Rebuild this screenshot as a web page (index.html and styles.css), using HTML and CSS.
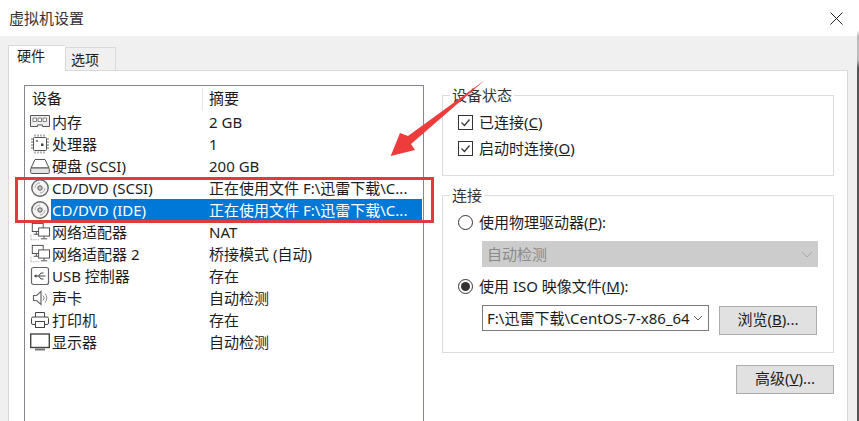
FILE: index.html
```html
<!DOCTYPE html>
<html lang="zh-CN">
<head>
    <meta charset="UTF-8">
    <meta name="viewport" content="width=device-width, initial-scale=1.0">
    <title>虚拟机设置</title>
    <link rel="stylesheet" href="styles.css">
</head>
<body>
    <svg class="defs" width="0" height="0">
        <symbol id="i-cd" viewBox="0 0 20 20">
            <circle cx="10" cy="10" r="8.2" fill="#f4f4f4" stroke="#666" stroke-width="1.4"/>
            <path d="M5 10a5 5 0 0 1 5-5M15 10a5 5 0 0 1-5 5" fill="none" stroke="#aaa"/>
            <circle cx="10" cy="10" r="2.200" fill="#ccc" stroke="#555"/>
        </symbol>
        <symbol id="i-net" viewBox="0 0 22 20">
            <rect x="2.500" y="0.500" width="12" height="9" fill="#fff" stroke="#444"/>
            <rect x="9.500" y="5.500" width="12" height="9" fill="#fff" stroke="#444"/>
            <path d="M7 9.500v3M4 12.500h5M15.500 14.500v2.500M12 17.500h7" fill="none" stroke="#444"/>
            <path d="M1 13v6M1 18.500h10" stroke="#999" stroke-dasharray="1 1"/>
        </symbol>
    </svg>

    <div class="titlebar">
        <span class="title">虚拟机设置</span>
        <svg class="close" width="13" height="13" viewBox="0 0 13 13"><path d="M0.500 0.500l12 12M12.500 0.500l-12 12" stroke="#222" fill="none"/></svg>
    </div>

    <div class="tabs">
        <div class="tab active">硬件</div>
        <div class="tab">选项</div>
    </div>

    <div class="panel">
        <div class="device-list">
            <div class="list-head">
                <div class="col-device">设备</div>
                <div class="col-summary">摘要</div>
            </div>
            <div class="row">
                <svg class="icon" viewBox="0 0 20 20"><path d="M0.500 3.500h19v11h-7v-1.500h-5v1.500h-7z" fill="#eee" stroke="#555"/><path d="M3 6h3.500v3.500H3zM8 6h3.500v3.500H8zM13 6h3.500v3.500H13z" fill="#fff" stroke="#666" stroke-width="0.800"/></svg>
                <span class="name">内存</span><span class="summary">2 GB</span>
            </div>
            <div class="row">
                <svg class="icon" viewBox="0 0 20 20"><rect x="3.500" y="3.500" width="13" height="13" rx="1" fill="#fff" stroke="#555"/><path d="M5 0.500v2M8 0.500v2M11 0.500v2M14 0.500v2M5 17.500v2M8 17.500v2M11 17.500v2M14 17.500v2M1 5h2M1 8h2M1 11h2M1 14h2M17 5h2M17 8h2M17 11h2M17 14h2" stroke="#666"/><rect x="6" y="6" width="2" height="2" fill="#888"/><rect x="11" y="9.500" width="2.500" height="2.500" fill="#444"/></svg>
                <span class="name">处理器</span><span class="summary">1</span>
            </div>
            <div class="row">
                <svg class="icon" viewBox="0 0 20 20"><path d="M5 3.500h10L19 12H1z" fill="#fff" stroke="#555"/><rect x="0.700" y="12" width="18.600" height="5.500" rx="1" fill="#e4e4e4" stroke="#555"/></svg>
                <span class="name">硬盘 (SCSI)</span><span class="summary">200 GB</span>
            </div>
            <div class="row">
                <svg class="icon"><use href="#i-cd"/></svg>
                <span class="name">CD/DVD (SCSI)</span><span class="summary">正在使用文件 F:\迅雷下载\C...</span>
            </div>
            <div class="row selected">
                <svg class="icon"><use href="#i-cd"/></svg>
                <span class="name">CD/DVD (IDE)</span><span class="summary">正在使用文件 F:\迅雷下载\C...</span>
            </div>
            <div class="row">
                <svg class="icon"><use href="#i-net"/></svg>
                <span class="name">网络适配器</span><span class="summary">NAT</span>
            </div>
            <div class="row">
                <svg class="icon"><use href="#i-net"/></svg>
                <span class="name">网络适配器 2</span><span class="summary">桥接模式 (自动)</span>
            </div>
            <div class="row">
                <svg class="icon" viewBox="0 0 20 20"><rect x="1.500" y="1.500" width="17" height="17" rx="2" fill="#fff" stroke="#666" stroke-width="1.200"/><path d="M4.500 10h11M8.500 10l2.500-3h2.500M8.500 10l2.500 3h2.500" fill="none" stroke="#444"/><path d="M4 10l2.500-1.800v3.600z" fill="#444"/></svg>
                <span class="name">USB 控制器</span><span class="summary">存在</span>
            </div>
            <div class="row">
                <svg class="icon" viewBox="0 0 20 20"><path d="M3.500 7.500h3L11 3.500v13l-4.500-4H3.500z" fill="#fff" stroke="#666" stroke-width="1.200"/><path d="M13 7.500a3.500 3.500 0 0 1 0 5M15 5.500a6.500 6.500 0 0 1 0 9" fill="none" stroke="#888"/></svg>
                <span class="name">声卡</span><span class="summary">自动检测</span>
            </div>
            <div class="row">
                <svg class="icon" viewBox="0 0 20 20"><path d="M5.500 7V2.500h9V7" fill="#fff" stroke="#444"/><rect x="1.500" y="7" width="17" height="7.500" rx="1.500" fill="#fff" stroke="#444"/><rect x="5.500" y="11.500" width="9" height="6" fill="#fff" stroke="#444"/></svg>
                <span class="name">打印机</span><span class="summary">存在</span>
            </div>
            <div class="row">
                <svg class="icon" viewBox="0 0 20 20"><rect x="0.700" y="2" width="18.600" height="13.500" fill="#fff" stroke="#444" stroke-width="1.400"/><path d="M5 17.500h10" stroke="#777" stroke-width="2"/></svg>
                <span class="name">显示器</span><span class="summary">自动检测</span>
            </div>
        </div>

        <div class="side">
            <fieldset class="group group-status">
                <legend>设备状态</legend>
                <label class="opt"><span class="check"><svg width="13" height="13" viewBox="0 0 13 13"><path d="M2.500 6.500l3 3 5-6" fill="none" stroke="#333" stroke-width="1.200"/></svg></span><span>已连接(<u>C</u>)</span></label>
                <label class="opt"><span class="check"><svg width="13" height="13" viewBox="0 0 13 13"><path d="M2.500 6.500l3 3 5-6" fill="none" stroke="#333" stroke-width="1.200"/></svg></span><span>启动时连接(<u>O</u>)</span></label>
            </fieldset>

            <fieldset class="group group-conn">
                <legend>连接</legend>
                <label class="opt"><span class="radio"></span><span>使用物理驱动器(<u>P</u>):</span></label>
                <div class="select disabled">
                    <span>自动检测</span>
                    <svg width="12" height="7" viewBox="0 0 12 7"><path d="M1 1l5 5 5-5" fill="none" stroke="#aaa"/></svg>
                </div>
                <label class="opt opt-iso"><span class="radio on"></span><span>使用 ISO 映像文件(<u>M</u>):</span></label>
                <div class="file-row">
                    <div class="select combo">
                        <span>F:\迅雷下载\CentOS-7-x86_64</span>
                        <svg width="10" height="6" viewBox="0 0 10 6"><path d="M1 1l4 4 4-4" fill="none" stroke="#666"/></svg>
                    </div>
                    <button class="btn">浏览(<u>B</u>)...</button>
                </div>
            </fieldset>

            <div class="actions">
                <button class="btn">高级(<u>V</u>)...</button>
            </div>
        </div>
    </div>

    <!-- annotations on top of the screenshot -->
    <div class="window-edge"></div>
    <div class="mark-box"></div>
    <svg class="mark-arrow" width="100" height="82" viewBox="0 0 100 82">
        <path d="M97 2L20 58l-8-3L2.700 78 27 72l-4-6z" fill="#ee3b3b"/>
    </svg>
</body>
</html>
```

FILE: styles.css
```css
* {
    box-sizing: border-box;
}

html, body {
    margin: 0;
    height: 100%;
}

body {
    position: relative;
    display: flex;
    flex-direction: column;
    height: 421px;
    overflow: hidden;
    background-color: #f0f0f0;
    color: #1c1c1c;
    font-family: "Noto Sans", "Noto Sans CJK SC", sans-serif;
    font-size: 15px;
    line-height: 20px;
}

.defs {
    position: absolute;
}

.titlebar {
    display: flex;
    align-items: center;
    justify-content: space-between;
    height: 36px;
    padding: 0 16px 0 9px;
    background-color: #fff;
}

.title {
    color: #333;
}

.tabs {
    display: flex;
    align-items: flex-end;
    height: 34px;
    padding-left: 8px;
}

.tab {
    width: 51px;
    height: 23px;
    padding-left: 5px;
    background-color: #f0f0f0;
    border: 1px solid #d9d9d9;
    border-bottom: none;
    font-size: 14px;
    line-height: 24px;
}

.tab.active {
    position: relative;
    width: 57px;
    height: 26px;
    margin-bottom: -1px;
    padding-left: 8px;
    background-color: #fff;
    border-right: none;
    line-height: 20px;
}

.panel {
    display: flex;
    flex: 1;
    gap: 18px;
    min-height: 0;
    margin: 0 11px 0 8px;
    padding: 14px 13px 0 15px;
    background-color: #fff;
    border: 1px solid #d9d9d9;
    border-bottom: none;
}

.device-list {
    flex: none;
    width: 400px;
    padding: 2px 1px 0;
    border: 1px solid #828790;
    border-bottom: none;
}

.list-head {
    display: flex;
    height: 23px;
    line-height: 20px;
}

.col-device {
    width: 177px;
    padding-left: 6px;
    border-right: 1px solid #e5e5e5;
}

.col-summary {
    padding-left: 6px;
}

.row {
    display: flex;
    align-items: center;
    height: 22px;
    line-height: 20px;
}

.icon {
    flex: none;
    width: 20px;
    height: 20px;
    margin: 0 1px 0 4px;
}

.name {
    width: 152px;
    padding-left: 1px;
    white-space: nowrap;
}

.summary {
    padding-left: 6px;
    white-space: nowrap;
}

.row.selected .name,
.row.selected .summary {
    height: 22px;
    line-height: 22px;
    background-color: #0078d7;
    color: #fff;
}

.row.selected .summary {
    flex: 1;
}

.side {
    flex: 1;
    min-width: 0;
}

.group {
    margin: 0;
    padding: 0 0 0 15px;
    border: 1px solid #dcdcdc;
}

.group legend {
    margin-left: -8px;
    padding: 0 2px;
    color: #333;
}

.group-status {
    height: 91px;
    padding-top: 4px;
}

.group-conn {
    height: 168px;
    margin-top: 9px;
    padding-top: 4px;
}

.opt {
    display: flex;
    align-items: center;
    gap: 6px;
    height: 26px;
}

.check {
    display: flex;
    align-items: center;
    justify-content: center;
    width: 15px;
    height: 15px;
    background-color: #fff;
    border: 1px solid #333;
}

.radio {
    position: relative;
    width: 15px;
    height: 15px;
    background-color: #fff;
    border: 1px solid #333;
    border-radius: 50%;
}

.radio.on::after {
    content: "";
    position: absolute;
    inset: 2px;
    background-color: #333;
    border-radius: 50%;
}

.select {
    display: flex;
    align-items: center;
    justify-content: space-between;
    height: 26px;
    margin-left: 24px;
    padding: 0 5px;
    white-space: nowrap;
}

.select.disabled {
    width: 336px;
    margin-top: 6px;
    background-color: #cccccc;
    color: #8a8a8a;
}

.opt-iso {
    margin-top: 6px;
}

.file-row {
    display: flex;
    align-items: flex-start;
    gap: 10px;
    margin-top: 6px;
}

.combo {
    width: 227px;
    padding: 0 5px 0 4px;
    background-color: #fff;
    border: 1px solid #7a7a7a;
}

.btn {
    width: 98px;
    height: 29px;
    margin: 1px 0 0;
    padding: 0 0 3px;
    background-color: #e1e1e1;
    border: 1px solid #adadad;
    color: #1c1c1c;
    font: inherit;
}

.actions {
    display: flex;
    justify-content: flex-end;
    margin-top: 11px;
}

.window-edge {
    position: absolute;
    right: 0;
    top: 0;
    bottom: 0;
    width: 2px;
    background: linear-gradient(#fff 30px, #bbb 36px, #bbb 60px, #555 68px);
}

.mark-box {
    position: absolute;
    left: 15px;
    top: 177px;
    width: 419px;
    height: 46px;
    border: 3px solid #e0393e;
}

.mark-arrow {
    position: absolute;
    left: 388px;
    top: 78px;
}
```
